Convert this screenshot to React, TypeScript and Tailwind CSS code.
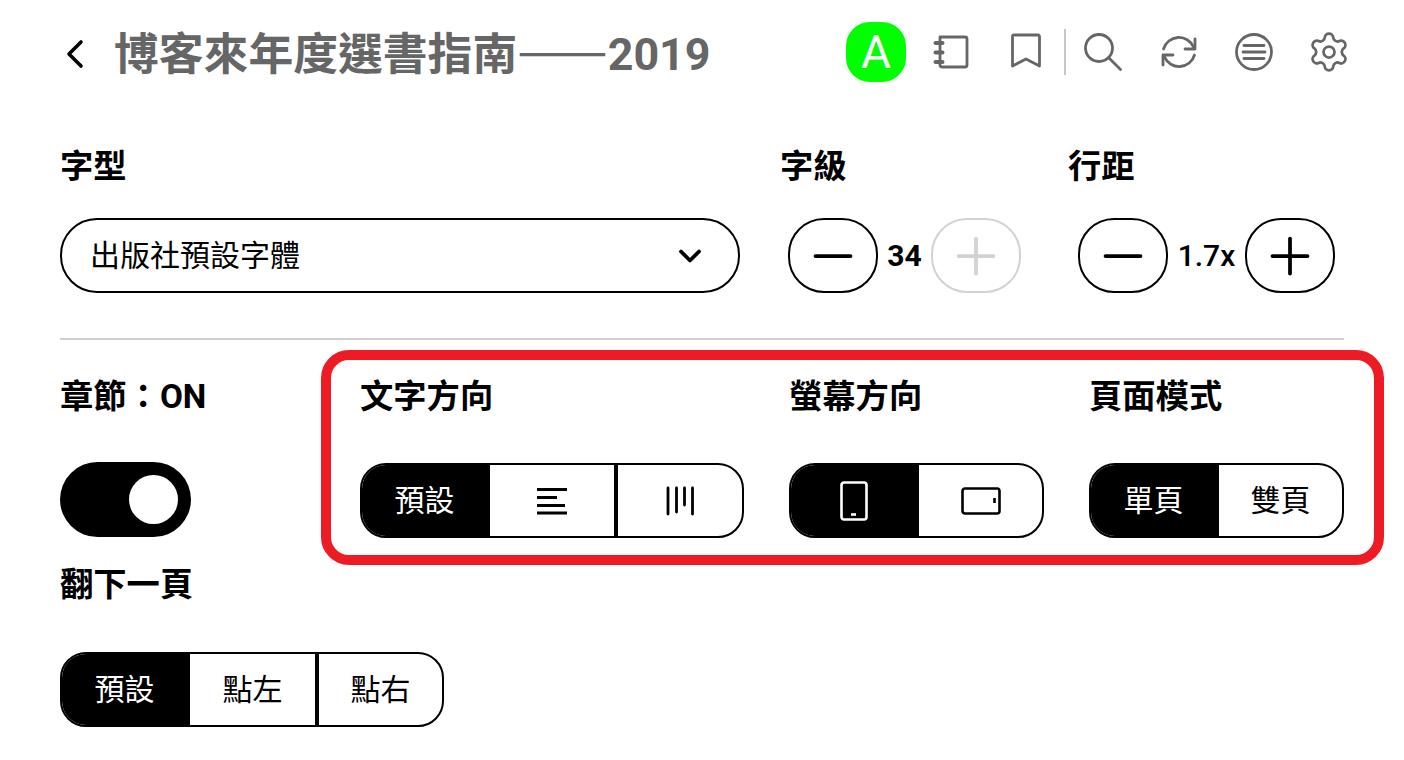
import React from 'react';
import { ChevronDown, Settings, Minus, Plus } from 'lucide-react';

const gray = '#666666';

const BackIcon = () => <svg width="20" height="32" viewBox="0 0 20 32" fill="none" stroke="#000" strokeWidth="3.600" strokeLinecap="round" strokeLinejoin="round">
    <path d="M16 4 4 16l12 12" />
  </svg>;

const NotebookIcon = () => <svg width="36" height="36" viewBox="0 0 36 36" fill="none" stroke={gray} strokeWidth="2.800" strokeLinecap="round" strokeLinejoin="round">
    <path d="M7 3h25a2 2 0 0 1 2 2v26a2 2 0 0 1-2 2H9a2 2 0 0 1-2-2V3z" />
    <path d="M2.500 9h7M2.500 18.500h7M2.500 28h7" strokeWidth="4" />
  </svg>;

const BookmarkIcon = () => <svg width="32" height="36" viewBox="0 0 32 36" fill="none" stroke={gray} strokeWidth="2.800" strokeLinecap="round" strokeLinejoin="round">
    <path d="M2.500 3.500a1.500 1.500 0 0 1 1.500-1.500h24a1.500 1.500 0 0 1 1.500 1.500V33l-13.500-7-13.500 7V3.500z" />
  </svg>;

const SearchIcon = () => <svg width="38" height="38" viewBox="0 0 38 38" fill="none" stroke={gray} strokeWidth="2.800" strokeLinecap="round">
    <circle cx="15" cy="15" r="13.500" />
    <path d="m25 25 11.500 11.500" />
  </svg>;

const SyncIcon = () => <svg width="38" height="38" viewBox="0 0 38 38" fill="none" stroke={gray} strokeWidth="2.800" strokeLinecap="round" strokeLinejoin="round">
    <path d="M3.500 16A16 16 0 0 1 33.500 14" />
    <path d="M35 6v10H25" />
    <path d="M34.500 22A16 16 0 0 1 4.500 24" />
    <path d="M3 32V22h10" />
  </svg>;

const MenuCircleIcon = () => <svg width="38" height="38" viewBox="0 0 38 38" fill="none" stroke={gray} strokeWidth="2.800" strokeLinecap="round">
    <circle cx="19" cy="19" r="17.500" />
    <path d="M9 12.500h20M8 19h22M9 25.500h20" />
  </svg>;

const LinesIcon = () => <svg width="30" height="28" viewBox="0 0 30 28" fill="none" stroke="#000" strokeWidth="3">
    <path d="M0 2.500h30M0 10.500h20M0 18.500h28M0 26h30" />
  </svg>;

const ColumnsIcon = () => <svg width="28" height="30" viewBox="0 0 28 30" fill="none" stroke="#000" strokeWidth="2.800" strokeLinecap="round">
    <path d="M2 2v26M10.500 2v24M18.500 2v17M26.500 2v26" />
  </svg>;

const PhoneIcon = () => <svg width="28" height="40" viewBox="0 0 28 40" fill="none" stroke="#fff" strokeWidth="2.600">
    <rect x="1.500" y="1.500" width="25" height="37" rx="2.500" />
    <path d="M11 33.500h5" />
  </svg>;

const TabletIcon = () => <svg width="40" height="28" viewBox="0 0 40 28" fill="none" stroke="#000" strokeWidth="2.600">
    <rect x="1.500" y="1.500" width="37" height="25" rx="2.500" />
    <path d="M33.500 11v5" />
  </svg>;

const Label = ({ children }: { children: React.ReactNode }) => <div className="h-[40px] text-[33.300px] leading-[40px] font-bold text-black whitespace-nowrap">{children}</div>;

const StepButton = ({ kind, disabled }: { kind: 'minus' | 'plus'; disabled?: boolean }) => {
  const Icon = kind === 'minus' ? Minus : Plus;
  return <button className={`flex h-[75px] w-[90px] shrink-0 items-center justify-center rounded-[36px] border-2 ${disabled ? 'border-[#d2d2d2] text-[#d2d2d2]' : 'border-black text-black'}`}>
      <Icon size={60} strokeWidth={1.500} />
    </button>;
};

type Option = { key: string; width: string; active?: boolean; divider?: boolean; content: React.ReactNode };

const Segment = ({ width, options }: { width: string; options: Option[] }) => <div className={`flex h-[75px] overflow-hidden rounded-[26px] border-2 border-black text-[30px] ${width}`}>
    {options.map(o => <div key={o.key} className={`flex items-center justify-center ${o.width} ${o.active ? 'bg-black pr-[3px] text-white' : 'text-black'} ${o.divider ? 'border-l-4 border-black' : ''}`}>
        {o.content}
      </div>)}
  </div>;

export default function App() {
  return <div className="h-[760px] w-[1404px] overflow-hidden bg-white pl-[60px] text-black font-['Roboto','Noto_Sans_CJK_TC',sans-serif]">
      <header className="flex h-[107px] items-center">
        <div className="ml-[5px] mr-[29px]"><BackIcon /></div>
        <h1 className="mb-[2px] w-[732px] text-[44.800px] leading-[60px] font-bold whitespace-nowrap text-[#666666]">
          博客來年度選書指南<span className="text-[54px] leading-none font-normal font-['Noto_Sans_CJK_TC']">——</span>2019
        </h1>
        <div className="flex items-center pb-[3px]">
          <div className="flex h-[60px] w-[60px] shrink-0 items-center justify-center rounded-[24px] bg-[#00ff00] text-[46px] text-white">A</div>
          <div className="ml-[27px]"><NotebookIcon /></div>
          <div className="ml-[41px] mb-[3px]"><BookmarkIcon /></div>
          <div className="ml-[22px] h-[46px] w-[2px] bg-[#c8c8c8]" />
          <div className="ml-[18px]"><SearchIcon /></div>
          <div className="ml-[38px]"><SyncIcon /></div>
          <div className="ml-[37px]"><MenuCircleIcon /></div>
          <Settings size={44} strokeWidth={1.500} className="ml-[34px] text-[#666666]" />
        </div>
      </header>

      <div className="flex pt-[40px]">
        <div className="w-[720px]">
          <Label>字型</Label>
          <div className="mt-[31px] flex h-[75px] w-[680px] items-center justify-between rounded-[37px] border-2 border-black pl-[28px] pr-[30px] text-[30px]">
            <span>出版社預設字體</span>
            <ChevronDown size={36} strokeWidth={2.500} />
          </div>
        </div>
        <div className="w-[288px]">
          <Label>字級</Label>
          <div className="mt-[31px] ml-[8px] flex items-center">
            <StepButton kind="minus" />
            <span className="w-[53px] text-center text-[30px] font-bold">34</span>
            <StepButton kind="plus" disabled />
          </div>
        </div>
        <div>
          <Label>行距</Label>
          <div className="mt-[31px] ml-[10px] flex items-center">
            <StepButton kind="minus" />
            <span className="w-[77px] text-center text-[30px] font-medium">1.7x</span>
            <StepButton kind="plus" />
          </div>
        </div>
      </div>

      <div className="mt-[45px] h-[2px] w-[1284px] bg-[#cfcfcf]" />

      <div className="mt-[10px] flex items-start">
        <div className="w-[261px] pt-[27px]">
          <Label>章節：ON</Label>
          <div className="mt-[45px] flex h-[75px] w-[131px] items-center justify-end rounded-full bg-black pr-[13px]">
            <div className="h-[49px] w-[49px] rounded-full bg-white" />
          </div>
          <div className="mt-[28px]"><Label>翻下一頁</Label></div>
          <div className="mt-[47px]">
            <Segment width="w-[384px]" options={[
              { key: 'a', width: 'w-[128px]', active: true, content: '預設' },
              { key: 'b', width: 'w-[125px]', content: '點左' },
              { key: 'c', width: 'w-[127px]', divider: true, content: '點右' }
            ]} />
          </div>
        </div>

        <div className="flex h-[215px] w-[1063px] rounded-[28px] border-[10px] border-[#ed1c24] pl-[29px] pt-[17px]">
          <div className="w-[429px]">
            <Label>文字方向</Label>
            <div className="mt-[46px]">
              <Segment width="w-[384px]" options={[
                { key: 'a', width: 'w-[128px]', active: true, content: '預設' },
                { key: 'b', width: 'w-[124px]', content: <LinesIcon /> },
                { key: 'c', width: 'w-[128px]', divider: true, content: <ColumnsIcon /> }
              ]} />
            </div>
          </div>
          <div className="w-[300px]">
            <Label>螢幕方向</Label>
            <div className="mt-[46px]">
              <Segment width="w-[255px]" options={[
                { key: 'a', width: 'w-[128px]', active: true, content: <PhoneIcon /> },
                { key: 'b', width: 'w-[123px]', content: <TabletIcon /> }
              ]} />
            </div>
          </div>
          <div>
            <Label>頁面模式</Label>
            <div className="mt-[46px]">
              <Segment width="w-[255px]" options={[
                { key: 'a', width: 'w-[128px]', active: true, content: '單頁' },
                { key: 'b', width: 'w-[123px]', content: '雙頁' }
              ]} />
            </div>
          </div>
        </div>
      </div>
    </div>;
}
